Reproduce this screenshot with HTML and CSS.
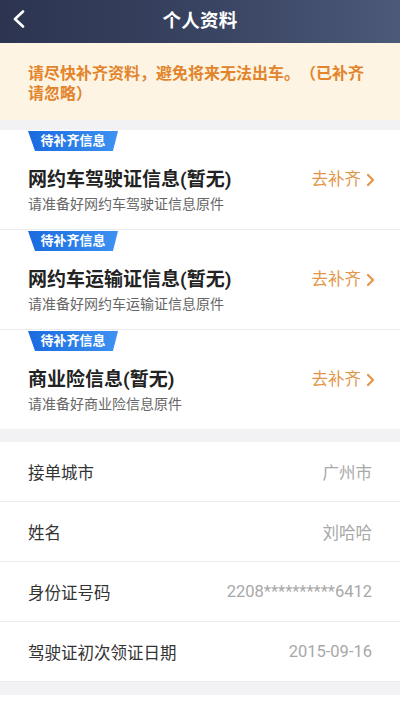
FILE: index.html
```html
<!DOCTYPE html>
<html lang="zh">
<head>
<meta charset="utf-8">
<title>个人资料</title>
<link rel="stylesheet" href="styles.css">
</head>
<body>
<div class="page">
  <header class="topbar">
    <span class="back">
      <svg width="14" height="18" viewBox="0 0 14 18"><polyline points="11,1.5 3,9 11,16.5" fill="none" stroke="#fff" stroke-width="2.6" stroke-linecap="round" stroke-linejoin="round"/></svg>
    </span>
    <h1 class="title">个人资料</h1>
  </header>

  <div class="notice">请尽快补齐资料，避免将来无法出车。（已补齐请忽略）</div>

  <section class="cards">
    <div class="card">
      <div class="tag">待补齐信息</div>
      <div class="card-body">
        <div class="card-text">
          <div class="card-title">网约车驾驶证信息(暂无)</div>
          <div class="card-sub">请准备好网约车驾驶证信息原件</div>
        </div>
        <div class="go">去补齐<svg width="10" height="14" viewBox="0 0 10 14"><polyline points="3,2 8,7 3,12" fill="none" stroke="#e3964a" stroke-width="2.2" stroke-linecap="round" stroke-linejoin="round"/></svg></div>
      </div>
    </div>
    <div class="card">
      <div class="tag">待补齐信息</div>
      <div class="card-body">
        <div class="card-text">
          <div class="card-title">网约车运输证信息(暂无)</div>
          <div class="card-sub">请准备好网约车运输证信息原件</div>
        </div>
        <div class="go">去补齐<svg width="10" height="14" viewBox="0 0 10 14"><polyline points="3,2 8,7 3,12" fill="none" stroke="#e3964a" stroke-width="2.2" stroke-linecap="round" stroke-linejoin="round"/></svg></div>
      </div>
    </div>
    <div class="card">
      <div class="tag">待补齐信息</div>
      <div class="card-body">
        <div class="card-text">
          <div class="card-title">商业险信息(暂无)</div>
          <div class="card-sub">请准备好商业险信息原件</div>
        </div>
        <div class="go">去补齐<svg width="10" height="14" viewBox="0 0 10 14"><polyline points="3,2 8,7 3,12" fill="none" stroke="#e3964a" stroke-width="2.2" stroke-linecap="round" stroke-linejoin="round"/></svg></div>
      </div>
    </div>
  </section>

  <section class="rows">
    <div class="row"><span class="label">接单城市</span><span class="value">广州市</span></div>
    <div class="row"><span class="label">姓名</span><span class="value">刘哈哈</span></div>
    <div class="row"><span class="label">身份证号码</span><span class="value">2208**********6412</span></div>
    <div class="row"><span class="label">驾驶证初次领证日期</span><span class="value">2015-09-16</span></div>
  </section>
  <div class="tail"></div>
</div>
</body>
</html>
```

FILE: styles.css
```css
html, body {
  margin: 0;
  padding: 0;
  background: #ffffff;
}
body {
  font-family: Roboto, "Noto Sans CJK SC", "Noto Sans", sans-serif;
  width: 400px;
  height: 710px;
  overflow: hidden;
}
.page {
  display: flex;
  flex-direction: column;
  background: #f2f2f4;
}
.topbar {
  height: 43px;
  background: linear-gradient(90deg, #2c3450 0%, #3a4563 55%, #4c5979 100%);
  display: flex;
  align-items: center;
  justify-content: center;
  position: relative;
  padding-bottom: 5px;
  box-sizing: border-box;
}
.back {
  position: absolute;
  left: 12px;
  top: 10px;
  display: flex;
}
.title {
  margin: 0;
  color: #ffffff;
  font-size: 18.5px;
  font-weight: 700;
  letter-spacing: 0.3px;
}
.notice {
  background: #fdf4e4;
  color: #e2842b;
  font-family: "Noto Sans CJK SC", sans-serif;
  font-size: 16px;
  font-weight: 700;
  line-height: 20px;
  text-spacing-trim: space-all;
  padding: 19px 30px 18px 28px;
}
.cards {
  margin-top: 10px;
  background: #ffffff;
}
.card {
  height: 100px;
  box-sizing: border-box;
  padding-top: 1px;
  border-bottom: 1px solid #ebebeb;
}
.card:last-child {
  border-bottom: none;
  height: 99px;
}
.tag {
  width: 90px;
  height: 20px;
  margin-left: 28px;
  background: linear-gradient(90deg, #1a6ae0, #3d92f2);
  clip-path: polygon(0 0, 100% 0, 94.4% 100%, 7.8% 100%);
  color: #ffffff;
  font-size: 13px;
  font-weight: 700;
  line-height: 20px;
  text-align: center;
}
.card-body {
  display: flex;
  align-items: flex-start;
  justify-content: space-between;
  padding: 16px 25px 0 28px;
}
.card-title {
  font-size: 19px;
  font-weight: 700;
  color: #222222;
  line-height: 26px;
}
.card-sub {
  font-size: 14px;
  color: #666666;
  line-height: 20px;
  margin-top: 1px;
}
.go {
  display: flex;
  align-items: center;
  gap: 4px;
  color: #e3964a;
  font-size: 16.5px;
  line-height: 26px;
}
.rows {
  margin-top: 13px;
  background: #ffffff;
}
.row {
  height: 59px;
  display: flex;
  align-items: center;
  justify-content: space-between;
  padding: 0 28px;
  border-bottom: 1px solid #ebebeb;
}
.row:last-child {
  border-bottom: none;
}
.label {
  font-size: 16.5px;
  color: #333333;
}
.value {
  font-size: 16.5px;
  color: #a8a8a8;
}
.tail {
  height: 13px;
  background: #f2f2f4;
  border-top: 1px solid #ebebeb;
}
```
